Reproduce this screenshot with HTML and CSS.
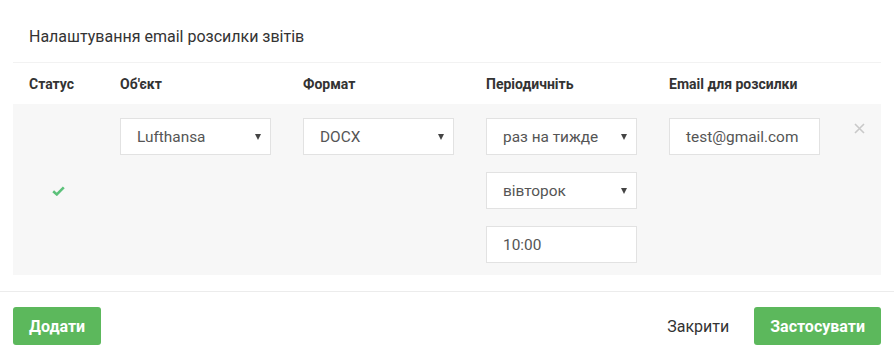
FILE: index.html
```html
<!DOCTYPE html>
<html lang="uk">
<head>
<meta charset="utf-8">
<title>Налаштування email розсилки звітів</title>
<link rel="stylesheet" href="styles.css">
</head>
<body>
<div class="modal">
  <div class="modal-body">
    <div class="title">Налаштування email розсилки звітів</div>
    <div class="grid head">
      <div>Статус</div>
      <div>Об'єкт</div>
      <div>Формат</div>
      <div>Періодичніть</div>
      <div>Email для розсилки</div>
    </div>
    <div class="grid row">
      <div class="status">
        <svg class="check" width="13" height="10" viewBox="0 0 13 10"><path d="M1.2 5.2 L4.8 8.4 L11.8 1.4" fill="none" stroke="#5cc17a" stroke-width="2.6" stroke-linejoin="miter"/></svg>
      </div>
      <div class="cell">
        <div class="field select"><span>Lufthansa</span><i class="arrow"></i></div>
      </div>
      <div class="cell">
        <div class="field select"><span>DOCX</span><i class="arrow"></i></div>
      </div>
      <div class="cell stack">
        <div class="field select"><span>раз на тижде</span><i class="arrow"></i></div>
        <div class="field select"><span>вівторок</span><i class="arrow"></i></div>
        <div class="field"><span>10:00</span></div>
      </div>
      <div class="cell email">
        <div class="field"><span>test@gmail.com</span></div>
        <svg class="close" width="11" height="11" viewBox="0 0 11 11"><path d="M1 1 L10 10 M10 1 L1 10" stroke="#c9c9c9" stroke-width="1.6"/></svg>
      </div>
    </div>
  </div>
  <div class="footer">
    <button class="btn">Додати</button>
    <div class="actions">
      <span class="link">Закрити</span>
      <button class="btn">Застосувати</button>
    </div>
  </div>
</div>
</body>
</html>
```
FILE: styles.css
```css
* { box-sizing: border-box; }
html, body { margin: 0; padding: 0; background: #fff; }
body {
  font-family: Roboto, "Noto Sans", "Liberation Sans", sans-serif;
  color: #333;
  width: 894px;
  height: 357px;
  overflow: hidden;
}
.modal-body { padding: 0 13px; }
.title {
  font-size: 16px;
  line-height: 20px;
  padding: 27px 16px 15px;
  border-bottom: 1px solid #f2f2f2;
  color: #333;
}
.grid {
  display: grid;
  grid-template-columns: 91px 183px 183px 183px 1fr;
  padding: 0 16px;
}
.head {
  height: 41px;
  align-items: center;
  font-size: 14px;
  font-weight: 700;
  color: #333;
}
.row {
  background: #f7f7f7;
  padding: 14px 16px 12px;
  align-items: start;
}
.status {
  align-self: center;
  padding-left: 23px;
  display: flex;
}
.stack { display: flex; flex-direction: column; gap: 17px; }
.field {
  width: 151px;
  height: 37px;
  background: #fff;
  border: 1px solid #e2e2e2;
  display: flex;
  align-items: center;
  justify-content: space-between;
  padding: 0 9px 0 16px;
  font-size: 15.4px;
  color: #555;
  white-space: nowrap;
  overflow: hidden;
}
.arrow {
  width: 0;
  height: 0;
  border-left: 3.5px solid transparent;
  border-right: 3.5px solid transparent;
  border-top: 6px solid #444;
  flex: none;
}
.email { display: flex; justify-content: space-between; align-items: flex-start; }
.close { margin-top: 5px; margin-right: 0; }
.footer {
  margin-top: 16px;
  border-top: 1px solid #ececec;
  padding: 15px 13px 12px;
  display: flex;
  justify-content: space-between;
  align-items: center;
}
.btn {
  font-family: inherit;
  height: 38px;
  background: #5cb85c;
  color: #fff;
  border: 0;
  border-radius: 3px;
  font-size: 16px;
  font-weight: 700;
  padding: 0 16px;
}
.actions { display: flex; align-items: center; gap: 25px; }
.link { font-size: 16px; color: #333; }
```
